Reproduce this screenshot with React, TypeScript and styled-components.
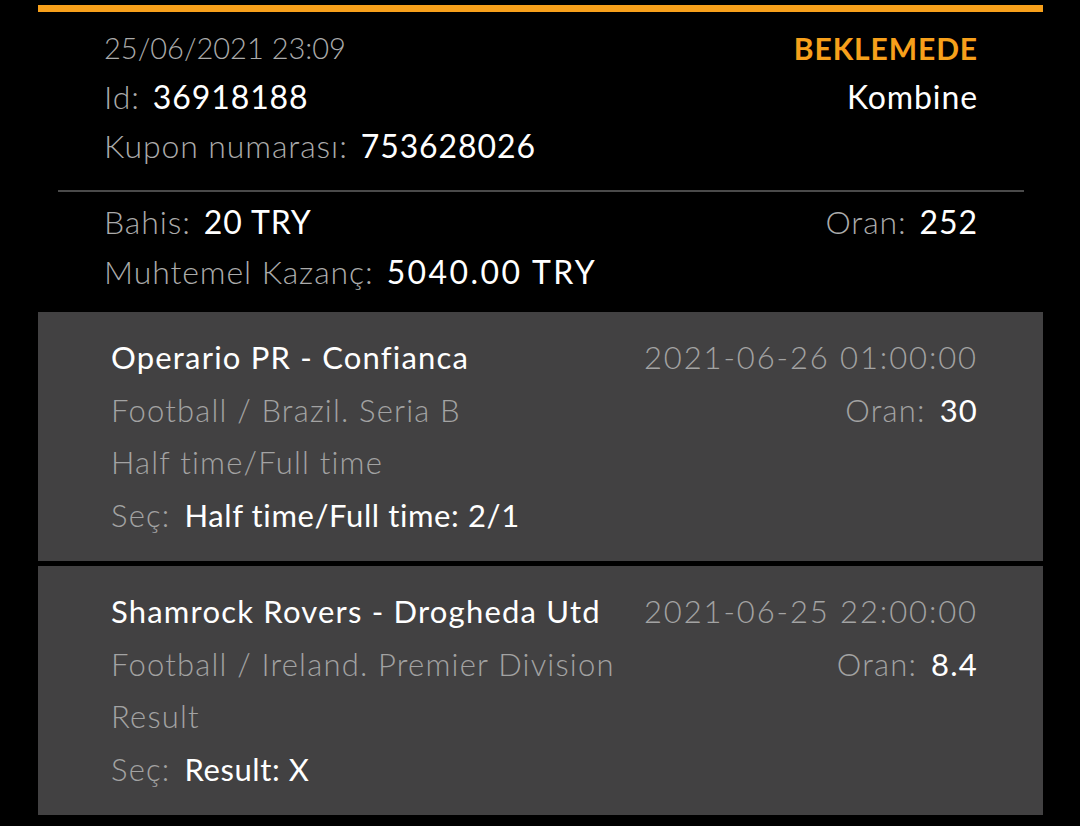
import React from "react";
import styled, { createGlobalStyle } from "styled-components";

const GlobalStyle = createGlobalStyle`
  html, body {
    margin: 0;
    padding: 0;
    background: #000;
  }
  body {
    font-family: Lato, "Open Sans", sans-serif;
    -webkit-font-smoothing: antialiased;
  }
`;

const Page = styled.div`
  width: 1080px;
  height: 826px;
  box-sizing: border-box;
  background: #000;
  padding: 5px 37px 0 38px;
  overflow: hidden;
`;

const TopBar = styled.div`
  height: 7px;
  background: #f7a01b;
`;

const Section = styled.div<{ $pt: number; $pb: number }>`
  padding: ${(p) => p.$pt}px 65px ${(p) => p.$pb}px 66px;
`;

const Row = styled.div<{ $h: number }>`
  display: flex;
  justify-content: space-between;
  align-items: center;
  height: ${(p) => p.$h}px;
  font-size: 32px;
  font-weight: 300;
  letter-spacing: 0.9px;
  white-space: nowrap;
`;

const Label = styled.span`
  color: #ababab;
  margin-right: 13px;
`;

const Value = styled.span<{ $wide?: boolean }>`
  color: #fff;
  font-weight: 400;
  letter-spacing: ${(p) => (p.$wide ? "2.4px" : "inherit")};
`;

const Stamp = styled.span`
  color: #ababab;
  font-size: 29px;
  letter-spacing: 0;
`;

const Status = styled.span`
  color: #f7a01b;
  font-weight: 700;
  font-size: 30px;
  letter-spacing: 0.9px;
`;

const Divider = styled.div`
  height: 2px;
  background: #4a4a4a;
  margin: 0 19px 0 20px;
`;

const Event = styled.div`
  background: #424142;
  padding: 19px 65px 18px 73px;
  height: 249px;
  box-sizing: border-box;
  display: flex;
  justify-content: space-between;
  & + & {
    margin-top: 5px;
  }
`;

const Col = styled.div<{ $right?: boolean }>`
  display: flex;
  flex-direction: column;
  align-items: ${(p) => (p.$right ? "flex-end" : "flex-start")};
`;

const Line = styled.div<{ $dim?: boolean; $spacing?: number }>`
  height: 52.5px;
  line-height: 52.5px;
  font-size: 31px;
  font-weight: ${(p) => (p.$dim ? 300 : 400)};
  letter-spacing: ${(p) => p.$spacing ?? 1.2}px;
  white-space: nowrap;
  color: ${(p) => (p.$dim ? "#a3a3a3" : "#fff")};
`;

const PLabel = styled.span`
  color: #a3a3a3;
  font-weight: 300;
  letter-spacing: 1.2px;
  margin-right: 14px;
`;

type EventData = {
  title: string;
  league: string;
  market: string;
  pick: string;
  date: string;
  odds: string;
};

const events: EventData[] = [
  {
    title: "Operario PR - Confianca",
    league: "Football / Brazil. Seria B",
    market: "Half time/Full time",
    pick: "Half time/Full time: 2/1",
    date: "2021-06-26 01:00:00",
    odds: "30",
  },
  {
    title: "Shamrock Rovers - Drogheda Utd",
    league: "Football / Ireland. Premier Division",
    market: "Result",
    pick: "Result: X",
    date: "2021-06-25 22:00:00",
    odds: "8.4",
  },
];

export default function App() {
  return (
    <>
      <GlobalStyle />
      <Page>
        <TopBar />
        <Section $pt={11} $pb={20}>
          <Row $h={49}>
            <Stamp>25/06/2021 23:09</Stamp>
            <Status>BEKLEMEDE</Status>
          </Row>
          <Row $h={49}>
            <span>
              <Label>Id:</Label>
              <Value>36918188</Value>
            </span>
            <Value>Kombine</Value>
          </Row>
          <Row $h={49}>
            <span>
              <Label>Kupon numarası:</Label>
              <Value>753628026</Value>
            </span>
          </Row>
        </Section>
        <Divider />
        <Section $pt={4} $pb={16}>
          <Row $h={50}>
            <span>
              <Label>Bahis:</Label>
              <Value>20 TRY</Value>
            </span>
            <span>
              <Label>Oran:</Label>
              <Value>252</Value>
            </span>
          </Row>
          <Row $h={50}>
            <span>
              <Label>Muhtemel Kazanç:</Label>
              <Value $wide>5040.00 TRY</Value>
            </span>
          </Row>
        </Section>
        {events.map((e) => (
          <Event key={e.title}>
            <Col>
              <Line>{e.title}</Line>
              <Line $dim>{e.league}</Line>
              <Line $dim>{e.market}</Line>
              <Line $spacing={0.6}>
                <PLabel>Seç:</PLabel>
                {e.pick}
              </Line>
            </Col>
            <Col $right>
              <Line $dim $spacing={1.9}>
                {e.date}
              </Line>
              <Line>
                <PLabel>Oran:</PLabel>
                {e.odds}
              </Line>
            </Col>
          </Event>
        ))}
      </Page>
    </>
  );
}
